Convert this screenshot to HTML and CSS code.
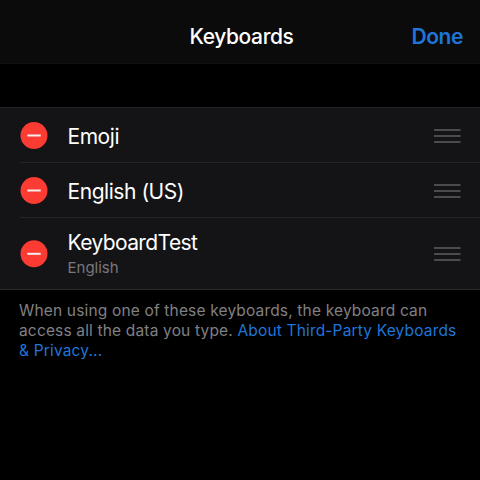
FILE: index.html
```html
<!DOCTYPE html>
<html lang="en">
<head>
<meta charset="utf-8">
<title>Keyboards</title>
<link rel="stylesheet" href="styles.css">
</head>
<body>
<header class="navbar">
  <h1 class="title">Keyboards</h1>
  <a class="done">Done</a>
</header>
<main>
  <ul class="list">
    <li class="row">
      <svg class="remove" viewBox="0 0 28 28"><circle cx="14" cy="13.5" r="13.5"/><path d="M7.3 13.5h13.4"/></svg>
      <div class="content"><div class="name">Emoji</div><svg class="handle" viewBox="0 0 28 16"><path d="M1 2h26.5M1 8h26.5M1 14h26.5"/></svg></div>
    </li>
    <li class="row">
      <svg class="remove" viewBox="0 0 28 28"><circle cx="14" cy="13.5" r="13.5"/><path d="M7.3 13.5h13.4"/></svg>
      <div class="content"><div class="name">English (US)</div><svg class="handle" viewBox="0 0 28 16"><path d="M1 2h26.5M1 8h26.5M1 14h26.5"/></svg></div>
    </li>
    <li class="row tall">
      <svg class="remove" viewBox="0 0 28 28"><circle cx="14" cy="13.8" r="13.5"/><path d="M7.3 13.8h13.4"/></svg>
      <div class="content"><div><div class="name tight">KeyboardTest</div><div class="language">English</div></div><svg class="handle" viewBox="0 0 28 16"><path d="M1 2h26.5M1 8h26.5M1 14h26.5"/></svg></div>
    </li>
  </ul>
  <p class="note">When using one of these keyboards, the keyboard can<br>access all the data you type. <a>About Third-Party Keyboards<br>&amp; Privacy...</a></p>
</main>
</body>
</html>
```
FILE: styles.css
```css
* { box-sizing: border-box; }
body {
  margin: 0;
  height: 480px;
  overflow: hidden;
  background: #000;
  color: #fff;
  font-family: Inter, sans-serif;
}
.navbar {
  display: grid;
  grid-template-columns: 1fr auto 1fr;
  align-items: center;
  height: 64px;
  padding: 11px 17px 0 20px;
  background: #0b0b0b;
  border-bottom: 1px solid #111112;
}
.title {
  grid-column: 2;
  margin: 0;
  font-size: 21px;
  line-height: 26px;
  font-weight: 550;
  letter-spacing: -0.4px;
}
.done {
  justify-self: end;
  font-size: 21px;
  line-height: 26px;
  font-weight: 600;
  letter-spacing: -0.4px;
  color: #1f75d9;
}
.list {
  margin: 43px 0 0;
  padding: 0;
  list-style: none;
  background: #141416;
  border-top: 1px solid #222224;
  border-bottom: 1px solid #29292c;
}
.row {
  display: flex;
  align-items: center;
  height: 55px;
  padding-left: 20px;
  background: linear-gradient(#252528, #252528) 20px 100% / 100% 1px no-repeat;
}
.row.tall { height: 71px; background: none; }
.remove { width: 28px; height: 28px; flex: none; }
.remove circle { fill: #fc3b32; }
.remove path { stroke: #f4eeee; stroke-width: 2; fill: none; }
.content {
  display: flex;
  flex: 1;
  align-items: center;
  justify-content: space-between;
  padding: 0 19px 0 19.5px;
}
.name {
  padding-top: 2px;
  font-size: 21px;
  line-height: 26px;
  letter-spacing: -0.45px;
  white-space: nowrap;
}
.name.tight { padding-top: 0; letter-spacing: -0.6px; }
.language {
  font-size: 15px;
  line-height: 20px;
  margin-top: 2px;
  color: #78787c;
}
.handle { width: 28px; height: 16px; flex: none; }
.handle path { stroke: #4b4b4e; stroke-width: 2; }
.note {
  margin: 11px 19px 0;
  font-size: 15.5px;
  line-height: 20px;
  letter-spacing: 0.165px;
  color: #808083;
  white-space: nowrap;
}
.note a { color: #1f75d9; }
```
